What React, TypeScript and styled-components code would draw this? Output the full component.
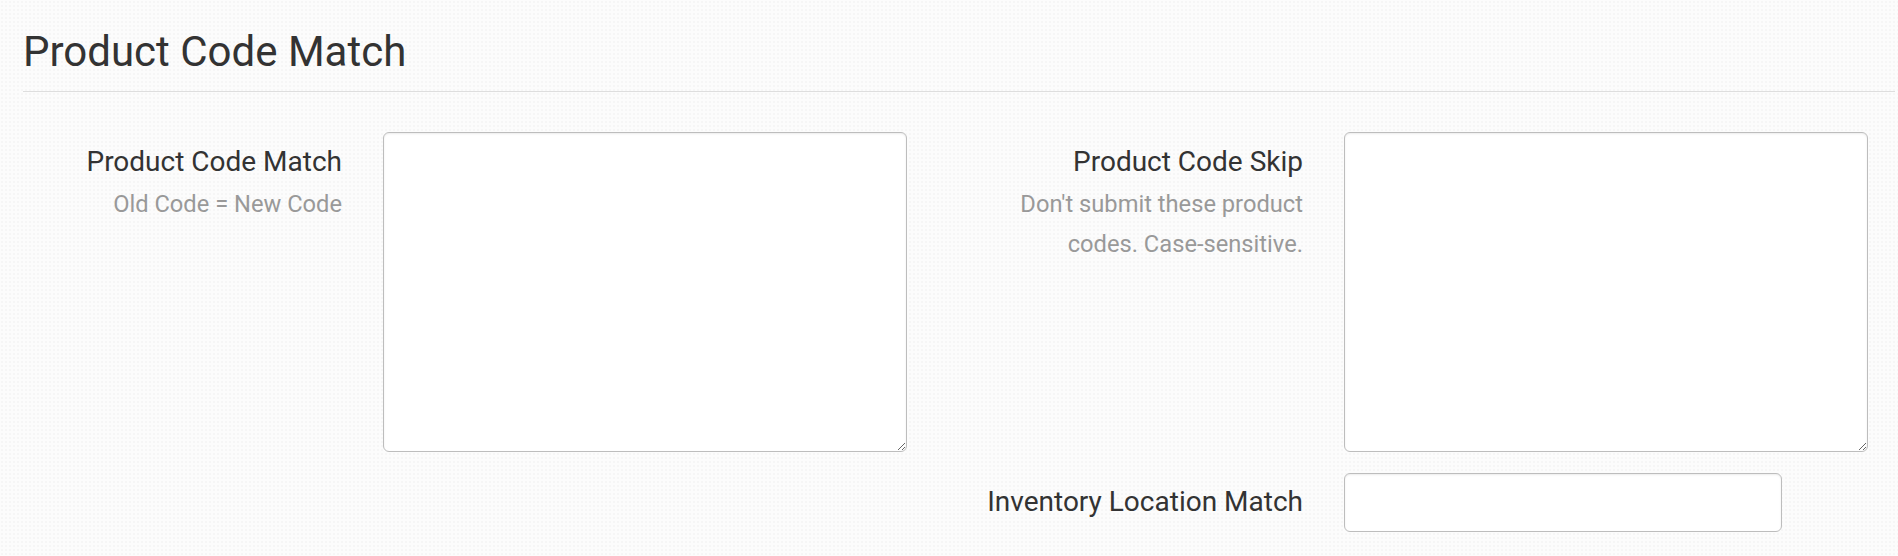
import React from 'react'
import styled, { createGlobalStyle } from 'styled-components'

const GlobalStyle = createGlobalStyle`
  html, body {
    margin: 0;
    padding: 0;
  }

  body {
    min-height: 100vh;
    background-color: #fcfcfc;
    background-image: radial-gradient(rgba(0, 0, 0, 0.025) 1px, transparent 1.2px);
    background-size: 4px 4px;
    font-family: Roboto, 'Liberation Sans', Arial, sans-serif;
    color: #333;
  }
`

const Page = styled.div`
  padding: 0 3px 0 23px;
`

const Header = styled.div`
  padding: 28px 0 16px;
  border-bottom: 1px solid #dedede;
`

const Title = styled.h1`
  margin: 0;
  font-size: 42px;
  font-weight: 400;
  line-height: 47px;
  color: #333;
`

const Form = styled.form`
  display: grid;
  grid-template-columns: repeat(2, 884px);
  column-gap: 77px;
  row-gap: 21px;
  margin-top: 40px;
`

const Field = styled.div<{ $col?: number }>`
  display: grid;
  grid-template-columns: 360px 524px;
  grid-column: ${({ $col }) => $col ?? 'auto'};
`

const LabelCell = styled.div<{ $top: number }>`
  padding: ${({ $top }) => $top}px 41px 0 0;
  text-align: right;
`

const Label = styled.label`
  display: block;
  font-size: 28px;
  line-height: 40px;
  color: #333;
`

const Help = styled.div`
  margin-top: 2px;
  font-size: 23.7px;
  line-height: 40px;
  color: #999;
`

const TextArea = styled.textarea`
  box-sizing: border-box;
  display: block;
  width: 524px;
  height: 320px;
  margin: 0;
  padding: 8px 12px;
  border: 1px solid #bdbdbd;
  border-radius: 6px;
  background: #fff;
  box-shadow: inset 0 1px 2px rgba(0, 0, 0, 0.08);
  font: inherit;
  font-size: 22px;
  color: #333;
  outline: none;
`

const TextInput = styled.input`
  box-sizing: border-box;
  display: block;
  width: 438px;
  height: 59px;
  margin: 0;
  padding: 8px 12px;
  border: 1px solid #bdbdbd;
  border-radius: 6px;
  background: #fff;
  box-shadow: inset 0 1px 2px rgba(0, 0, 0, 0.08);
  font: inherit;
  font-size: 22px;
  color: #333;
  outline: none;
`

export default function App() {
  return (
    <>
      <GlobalStyle />
      <Page>
        <Header>
          <Title>Product Code Match</Title>
        </Header>
        <Form onSubmit={(e) => e.preventDefault()}>
          <Field>
            <LabelCell $top={10}>
              <Label htmlFor="code-match">Product Code Match</Label>
              <Help>Old Code = New Code</Help>
            </LabelCell>
            <TextArea id="code-match" />
          </Field>
          <Field>
            <LabelCell $top={10}>
              <Label htmlFor="code-skip">Product Code Skip</Label>
              <Help>Don't submit these product codes. Case-sensitive.</Help>
            </LabelCell>
            <TextArea id="code-skip" />
          </Field>
          <Field $col={2}>
            <LabelCell $top={9}>
              <Label htmlFor="location-match">Inventory Location Match</Label>
            </LabelCell>
            <TextInput id="location-match" type="text" />
          </Field>
        </Form>
      </Page>
    </>
  )
}
